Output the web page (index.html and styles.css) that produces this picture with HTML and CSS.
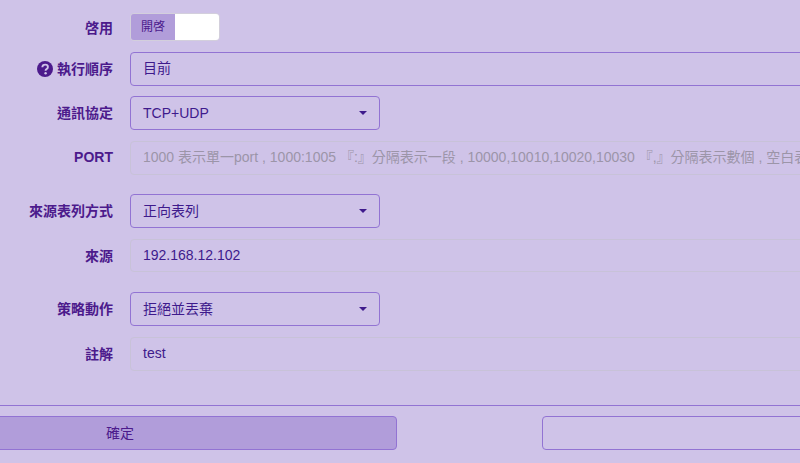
FILE: index.html
```html
<!DOCTYPE html>
<html lang="zh-Hant">
<head>
<meta charset="utf-8">
<title>策略</title>
<link rel="stylesheet" href="styles.css">
</head>
<body>
<form class="form">
  <div class="row row-toggle">
    <label class="label">啓用</label>
    <div class="toggle"><span class="toggle-on">開啓</span><span class="toggle-off"></span></div>
  </div>
  <div class="row row-order">
    <label class="label">
      <svg class="help" viewBox="0 0 16 16" width="16" height="16" aria-hidden="true"><circle cx="8" cy="8" r="8" fill="#4c1a8c"/><path d="M5.3 6.2C5.4 4.6 6.6 3.6 8.2 3.6c1.6 0 2.7 1 2.7 2.3 0 1.1-.6 1.7-1.4 2.2-.7.4-.9.7-.9 1.3v.3" fill="none" stroke="#cfc3e8" stroke-width="1.9"/><circle cx="8.6" cy="12.2" r="1.2" fill="#cfc3e8"/></svg>
      執行順序
    </label>
    <div class="field field-active cjk">目前</div>
  </div>
  <div class="row row-proto">
    <label class="label">通訊協定</label>
    <div class="select"><span>TCP+UDP</span><i class="caret"></i></div>
  </div>
  <div class="row row-port">
    <label class="label label-latin">PORT</label>
    <div class="field field-muted placeholder">1000 表示單一port , 1000:1005 『:』分隔表示一段 , 10000,10010,10020,10030 『,』分隔表示數個 , 空白表示全部</div>
  </div>
  <div class="row row-srcmode">
    <label class="label">來源表列方式</label>
    <div class="select cjk"><span>正向表列</span><i class="caret"></i></div>
  </div>
  <div class="row row-src">
    <label class="label">來源</label>
    <div class="field field-muted field-short">192.168.12.102</div>
  </div>
  <div class="row row-action">
    <label class="label">策略動作</label>
    <div class="select cjk"><span>拒絕並丟棄</span><i class="caret"></i></div>
  </div>
  <div class="row row-note">
    <label class="label">註解</label>
    <div class="field field-muted">test</div>
  </div>
  <hr class="rule">
  <div class="actions">
    <button type="button" class="btn btn-primary">確定</button>
    <button type="button" class="btn btn-ghost"></button>
  </div>
</form>
</body>
</html>
```
FILE: styles.css
```css
* { box-sizing: border-box; }
html, body { margin: 0; height: 100%; }
body {
  overflow: hidden;
  background: #cfc3e8;
  color: #3e1a8c;
  font-family: "Liberation Sans", "Noto Sans CJK TC", sans-serif;
  font-size: 14px;
}
.form { width: 1000px; padding-top: 13px; }
.row { display: grid; grid-template-columns: 113px 1fr; column-gap: 17px; align-items: center; }
.row-order { margin-top: 11px; }
.row-proto { margin-top: 10px; }
.row-port { margin-top: 11px; }
.row-srcmode { margin-top: 19px; }
.row-src { margin-top: 11px; }
.row-action { margin-top: 20px; }
.row-note { margin-top: 11px; }
.label {
  display: flex;
  justify-content: flex-end;
  align-items: center;
  gap: 4px;
  padding-bottom: 2px;
  color: #4c1a8c;
  font-weight: 700;
  white-space: nowrap;
}
.row-toggle .label { padding-bottom: 0; }
.help { flex: none; margin-top: 2px; }
.toggle {
  display: flex;
  width: 90px;
  height: 28px;
  border-radius: 4px;
  overflow: hidden;
  border: 1px solid #d3cfdc;
  font-size: 12px;
}
.toggle-on {
  width: 44px;
  background: #b19dda;
  color: #4c1a8c;
  text-align: center;
  line-height: 26px;
}
.toggle-off { flex: 1; background: #fff; }
.field {
  height: 34px;
  padding: 0 12px;
  border-radius: 4px;
  line-height: 30px;
  white-space: nowrap;
  overflow: hidden;
}
.field-short { height: 33px; }
.field-active { border: 1px solid #9273d3; }
.field-muted { border: 1px solid #c8c2d8; }
.placeholder { color: #9c95a8; }
.select {
  display: flex;
  align-items: center;
  justify-content: space-between;
  width: 250px;
  height: 34px;
  padding: 0 12px;
  border: 1px solid #9273d3;
  border-radius: 4px;
}
.cjk span { padding-bottom: 2px; }
.caret {
  width: 0;
  height: 0;
  border-left: 4px solid transparent;
  border-right: 4px solid transparent;
  border-top: 4px solid #3e1a8c;
}
.rule { margin: 34px 0 0; border: 0; border-top: 1px solid #9273d3; }
.actions { display: flex; margin: 10px 0 0 -157px; gap: 145px; }
.btn {
  flex: none;
  height: 34px;
  border-radius: 4px;
  border: 1px solid #9273d3;
  font: inherit;
  color: #4c1a8c;
  padding: 0 0 2px;
}
.btn-primary { width: 554px; background: #b19dda; }
.btn-ghost { width: 554px; background: transparent; }
```
